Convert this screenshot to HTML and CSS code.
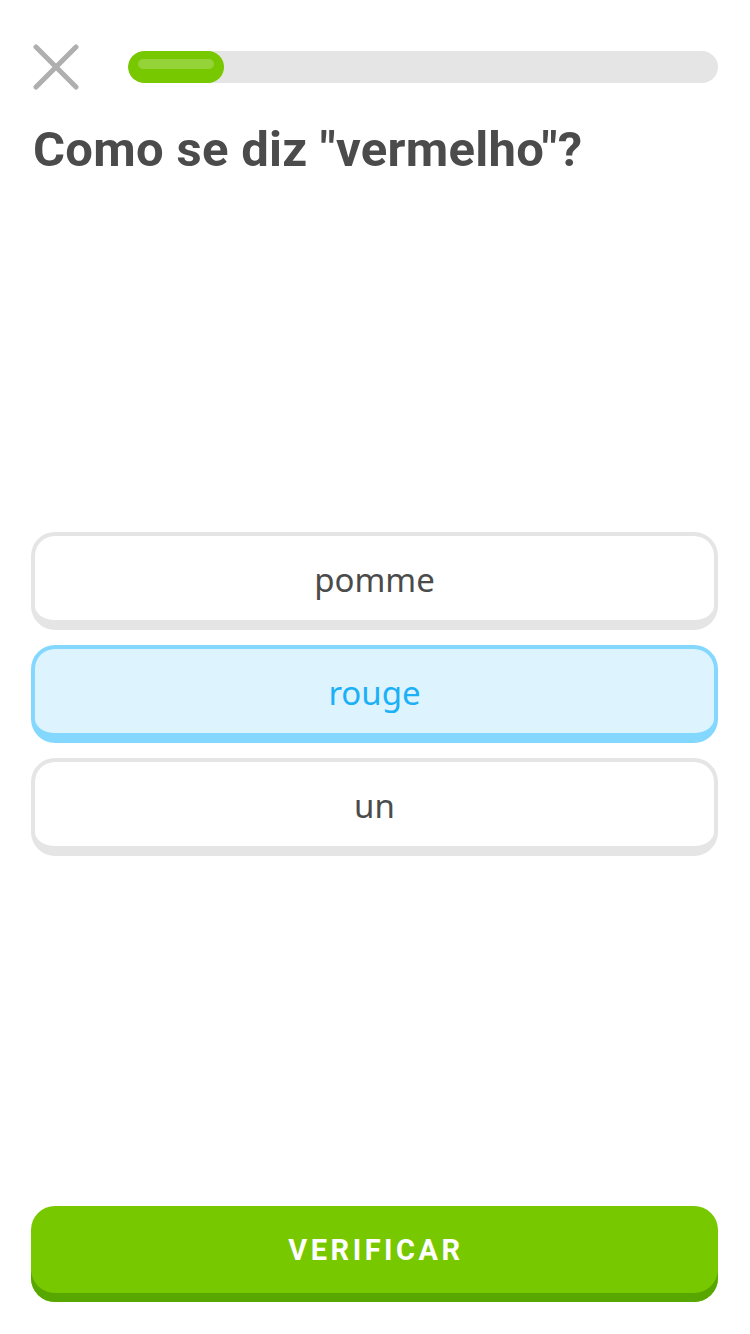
FILE: index.html
```html
<!DOCTYPE html>
<html lang="pt">
<head>
<meta charset="utf-8">
<title>Como se diz "vermelho"?</title>
<link rel="stylesheet" href="styles.css">
</head>
<body>
<div class="screen">
  <header class="topbar">
    <button class="close" aria-label="Fechar">
      <svg width="46" height="46" viewBox="0 0 46 46"><path d="M3 3 L43 43 M43 3 L3 43" stroke="#afafaf" stroke-width="5" stroke-linecap="round" fill="none"/></svg>
    </button>
    <div class="progress">
      <div class="progress-fill" style="width:96px"><span class="shine"></span></div>
    </div>
  </header>
  <h1 class="title">Como se diz "vermelho"?</h1>
  <div class="options">
    <div class="option">pomme</div>
    <div class="option selected">rouge</div>
    <div class="option">un</div>
  </div>
  <footer class="footer">
    <button class="check">VERIFICAR</button>
  </footer>
</div>
</body>
</html>
```
FILE: styles.css
```css
* { box-sizing: border-box; }
html, body { margin: 0; padding: 0; background: #fff; }
body { font-family: Roboto, "Noto Sans", sans-serif; color: #4b4b4b; }
.screen {
  width: 750px;
  height: 1334px;
  display: flex;
  flex-direction: column;
  padding: 0 32px 32px 31px;
}
.topbar {
  display: flex;
  align-items: center;
  gap: 49px;
  padding-top: 44px;
  padding-left: 2px;
}
.close {
  width: 46px;
  height: 46px;
  padding: 0;
  border: 0;
  background: none;
  display: block;
}
.close svg { display: block; }
.progress {
  flex: 1;
  height: 32px;
  background: #e5e5e5;
  border-radius: 16px;
  overflow: hidden;
}
.progress-fill {
  height: 32px;
  background: #78c800;
  border-radius: 16px;
  padding: 8px 10px 0;
}
.shine {
  display: block;
  height: 10px;
  border-radius: 5px;
  background: rgba(255,255,255,0.22);
}
.title {
  margin: 32px 0 0 2px;
  font-size: 49px;
  line-height: 56px;
  font-weight: 700;
  color: #4b4b4b;
  letter-spacing: 0.3px;
}
.options {
  display: flex;
  flex-direction: column;
  gap: 15px;
  margin-top: 354px;
}
.option {
  height: 98px;
  border: 4px solid #e5e5e5;
  border-bottom-width: 10px;
  border-radius: 24px;
  background: #fff;
  display: flex;
  align-items: center;
  justify-content: center;
  font-family: "Noto Sans", Roboto, sans-serif;
  font-size: 33px;
  color: #4b4b4b;
  padding-top: 2px;
}
.option.selected {
  background: #ddf4ff;
  border-color: #84d8ff;
  color: #1cb0f6;
}
.footer {
  margin-top: auto;
}
.check {
  width: 100%;
  height: 96px;
  border: 0;
  border-radius: 24px;
  background: #78c800;
  box-shadow: inset 0 -9px 0 #58a700;
  color: #fff;
  font-family: Roboto, "Noto Sans", sans-serif;
  font-weight: 700;
  font-size: 29px;
  letter-spacing: 3.5px;
  padding: 0 0 8px 3px;
  display: block;
}
```
